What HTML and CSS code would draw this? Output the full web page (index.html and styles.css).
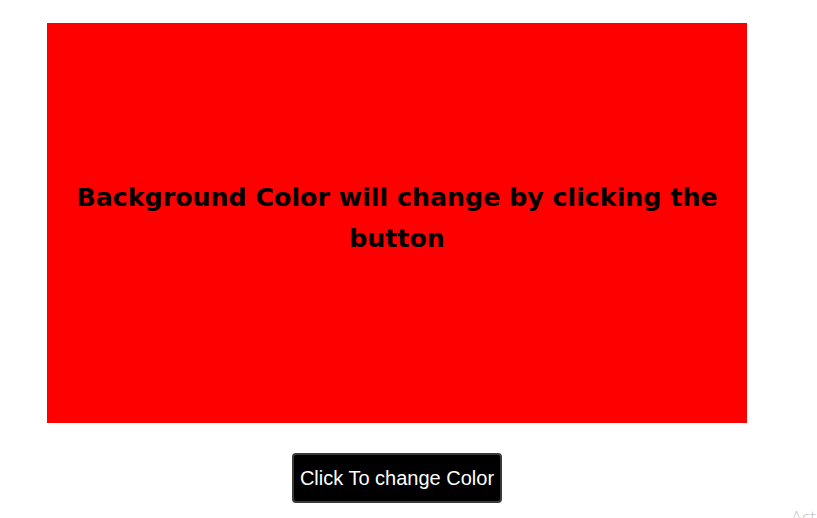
FILE: index.html
```html
<!DOCTYPE html>
<html>
<head>
<meta charset="utf-8">
<link rel="stylesheet" href="styles.css">
</head>
<body>
<main class="page">
  <section class="box">
    <h1 class="message">Background Color will change by clicking the button</h1>
  </section>
  <button class="btn" type="button">Click To change Color</button>
</main>
<div class="watermark">Act</div>
</body>
</html>
```
FILE: styles.css
```css
html, body {
  margin: 0;
  padding: 0;
  background: #ffffff;
  overflow: hidden;
}
.page {
  width: 700px;
  padding: 23px 0 0 47px;
  display: flex;
  flex-direction: column;
  align-items: center;
}
.box {
  width: 700px;
  height: 400px;
  background: #ff0000;
  display: flex;
  align-items: center;
  justify-content: center;
}
.message {
  margin: 0 0 10px;
  padding: 0 20px;
  text-align: center;
  font-family: "DejaVu Sans", sans-serif;
  font-weight: bold;
  font-size: 25.3px;
  line-height: 41px;
  color: #000;
}
.btn {
  margin-top: 30px;
  width: 210px;
  height: 50px;
  background: #000;
  color: #fff;
  border: 2px solid #3a3a3a;
  border-radius: 4px;
  font-family: "Liberation Sans", Arial, sans-serif;
  font-size: 20px;
  padding: 0;
}
.watermark {
  position: absolute;
  left: 791px;
  top: 508px;
  font-family: "Open Sans", sans-serif;
  font-weight: 300;
  font-size: 18px;
  line-height: 18px;
  color: #c4c4c4;
  white-space: nowrap;
}
```
